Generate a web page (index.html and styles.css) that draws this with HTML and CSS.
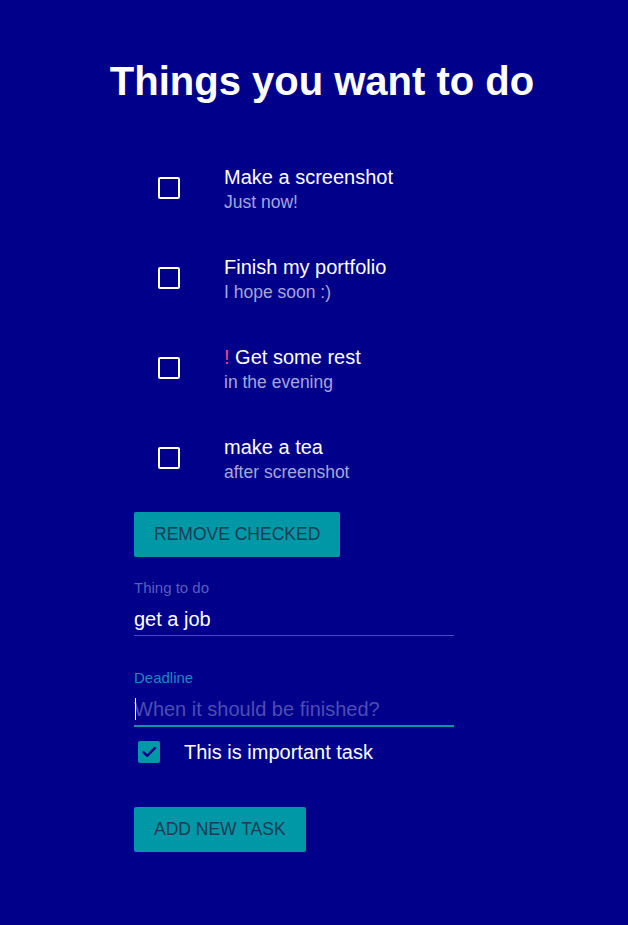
FILE: index.html
```html
<!DOCTYPE html>
<html lang="en">
<head>
<meta charset="utf-8">
<title>Things you want to do</title>
<link rel="stylesheet" href="styles.css">
</head>
<body>
<main class="page">
  <h1 class="title">Things you want to do</h1>
  <section class="content">
    <ul class="tasks">
      <li class="task">
        <span class="box"></span>
        <div class="task-text">
          <div class="primary">Make a screenshot</div>
          <div class="secondary">Just now!</div>
        </div>
      </li>
      <li class="task">
        <span class="box"></span>
        <div class="task-text">
          <div class="primary">Finish my portfolio</div>
          <div class="secondary">I hope soon :)</div>
        </div>
      </li>
      <li class="task">
        <span class="box"></span>
        <div class="task-text">
          <div class="primary"><span class="bang">!</span> Get some rest</div>
          <div class="secondary">in the evening</div>
        </div>
      </li>
      <li class="task">
        <span class="box"></span>
        <div class="task-text">
          <div class="primary">make a tea</div>
          <div class="secondary">after screenshot</div>
        </div>
      </li>
    </ul>
    <button class="btn btn-remove" type="button">Remove checked</button>
    <div class="field">
      <label class="field-label">Thing to do</label>
      <input class="field-input" type="text" value="get a job">
    </div>
    <div class="field field-focused">
      <label class="field-label">Deadline</label>
      <div class="input-wrap">
        <input class="field-input" type="text" placeholder="When it should be finished?">
        <span class="caret"></span>
      </div>
    </div>
    <div class="check-row">
      <span class="box-checked">
        <svg width="22" height="22" viewBox="0 0 22 22"><path d="M5.5 11.2 L9.2 14.8 L16.8 7.2" fill="none" stroke="#00008b" stroke-width="2.4" stroke-linecap="round" stroke-linejoin="round"/></svg>
      </span>
      <span class="check-label">This is important task</span>
    </div>
    <button class="btn btn-add" type="button">Add new task</button>
  </section>
</main>
</body>
</html>
```

FILE: styles.css
```css
html, body {
  margin: 0;
  padding: 0;
  background: #00008b;
}
body {
  font-family: "Liberation Sans", Arial, sans-serif;
  color: #ffffff;
  min-height: 925px;
}
.page {
  padding-top: 58px;
}
.title {
  margin: 0;
  font-size: 40px;
  line-height: 46px;
  font-weight: bold;
  text-align: center;
  padding-left: 16px;
}
.content {
  margin-left: 134px;
  width: 320px;
  display: flex;
  flex-direction: column;
  align-items: flex-start;
}
.tasks {
  list-style: none;
  margin: 40px 0 0 0;
  padding: 0;
  width: 100%;
}
.task {
  height: 90px;
  display: flex;
  align-items: center;
}
.box {
  width: 18px;
  height: 18px;
  border: 2px solid #ffffff;
  border-radius: 2px;
  margin-left: 24px;
  margin-bottom: 3px;
  flex: none;
}
.task-text {
  margin-left: 44px;
}
.primary {
  font-size: 20px;
  line-height: 24px;
  white-space: nowrap;
}
.secondary {
  font-size: 17.5px;
  line-height: 22px;
  margin-top: 2px;
  color: #a6a6dc;
  white-space: nowrap;
}
.bang {
  color: #ff4081;
}
.btn {
  height: 45px;
  padding: 0 20px;
  border: none;
  border-radius: 2px;
  background: #0097a7;
  color: #1b3c55;
  font-family: "Liberation Sans", Arial, sans-serif;
  font-size: 17.5px;
  text-transform: uppercase;
}
.btn-remove {
  margin-top: 8px;
}
.field {
  width: 320px;
  display: flex;
  flex-direction: column;
  margin-top: 22px;
}
.field + .field {
  margin-top: 33px;
}
.field-label {
  font-size: 15px;
  line-height: 18px;
  color: #5c5cbc;
}
.field-focused .field-label {
  color: #1f86c4;
}
.input-wrap {
  position: relative;
}
.field-input {
  display: block;
  box-sizing: content-box;
  width: 320px;
  height: 32px;
  margin: 6px 0 0 0;
  padding: 0;
  border: none;
  border-bottom: 1px solid #4a4ac6;
  background: transparent;
  color: #ffffff;
  font-family: "Liberation Sans", Arial, sans-serif;
  font-size: 20px;
  outline: none;
}
.field-input::placeholder {
  color: #4d4db4;
  opacity: 1;
}
.field-focused .field-input {
  border-bottom: 2px solid #0097a7;
}
.caret {
  position: absolute;
  left: 1px;
  top: 11px;
  width: 1px;
  height: 22px;
  background: #ffffff;
}
.check-row {
  height: 40px;
  margin-top: 5px;
  display: flex;
  align-items: center;
}
.box-checked {
  width: 22px;
  height: 22px;
  margin-left: 4px;
  border-radius: 2px;
  background: #0097a7;
  display: flex;
}
.check-label {
  margin-left: 24px;
  font-size: 20px;
}
.btn-add {
  margin-top: 35px;
}
```
